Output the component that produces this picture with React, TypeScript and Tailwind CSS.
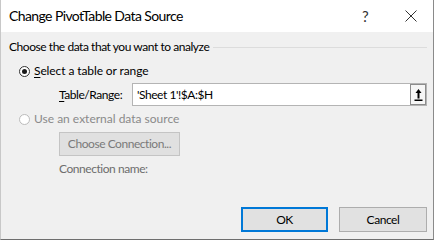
import React from "react"

function Radio({ checked, disabled }: { checked?: boolean; disabled?: boolean }) {
  return (
    <span
      className={`flex h-[11px] w-[11px] items-center justify-center rounded-full border bg-white ${
        disabled ? "border-[#bcbcbc]" : "border-[#333333]"
      }`}
    >
      {checked && <span className="h-[5px] w-[5px] rounded-full bg-[#1a1a1a]" />}
    </span>
  )
}

function CollapseIcon() {
  return (
    <svg width="9" height="14" viewBox="0 0 9 14" fill="none">
      <path d="M4.5 1 L1.5 5 H3.5 V10.5 H5.5 V5 H7.5 Z" fill="#000" />
      <rect x="0.5" y="11.5" width="8" height="1.5" fill="#000" />
    </svg>
  )
}

export default function App() {
  return (
    <div
      className="h-[241px] w-[435px] bg-white text-[12px] tracking-[-0.45px] text-black"
      style={{ fontFamily: 'Lato, "Noto Sans", sans-serif' }}
    >
      <div className="flex h-[240px] w-[434px] flex-col border-r border-b border-l border-r-[#8a8a8a] border-b-[#6e6e6e] border-l-[#c8c8c8] bg-[#f0f0f0]">
        {/* title bar */}
        <div className="flex h-[32px] items-center bg-white pl-[8px]">
          <span className="flex-1 text-[14px] tracking-[-0.6px] leading-none">Change PivotTable Data Source</span>
          <span className="w-[10px] text-[15px] leading-none text-[#333]">?</span>
          <span className="ml-[33px] mr-[16px] flex h-[12px] w-[12px] items-center justify-center">
            <svg width="12" height="12" viewBox="0 0 12 12">
              <path d="M0.5 0.5 L11.5 11.5 M11.5 0.5 L0.5 11.5" stroke="#333" strokeWidth="1" />
            </svg>
          </span>
        </div>

        {/* group header */}
        <div className="mt-[6px] flex h-[18px] items-center pl-[8px] pr-[6px]">
          <span className="whitespace-nowrap leading-none">Choose the data that you want to analyze</span>
          <span className="ml-[4px] h-px flex-1 bg-[#dcdcdc]" />
        </div>

        <div className="mt-[6px] flex h-[18px] items-center pl-[18px]">
          <Radio checked />
          <span className="ml-[4px] leading-none tracking-[-0.1px]">
            <span className="underline underline-offset-2">S</span>elect a table or range
          </span>
        </div>

        <div className="mt-[3px] flex h-[23px] items-center pl-[58px] pr-[6px]">
          <span className="w-[73px] whitespace-nowrap leading-none">
            <span className="underline underline-offset-2">T</span>able/Range:
          </span>
          <div className="flex h-[23px] flex-1 items-center border border-[#b4b4b4] bg-white pl-[4px]">
            <span className="flex-1 leading-none">'Sheet 1'!$A:$H</span>
            <span className="flex h-[21px] w-[16px] items-center justify-center border border-[#8c8c8c] bg-[#f6f6f6]">
              <CollapseIcon />
            </span>
          </div>
        </div>

        <div className="mt-[4px] flex h-[18px] items-center pl-[18px] text-[#8a8a8a]">
          <Radio disabled />
          <span className="ml-[4px] leading-none tracking-normal">Use an external data source</span>
        </div>

        <div className="mt-[4px] pl-[58px]">
          <div className="flex h-[24px] w-[121px] items-center justify-center whitespace-nowrap border border-[#c4c4c4] bg-[#e0e0e0] leading-none text-[#7a7a7a]">
            Choose Connection...
          </div>
        </div>

        <div className="mt-[5px] flex h-[16px] items-center pl-[58px] leading-none text-[#6d6d6d]">
          Connection name:
        </div>

        <div className="mt-[30px] flex justify-end gap-[11px] pr-[6px]">
          <div className="flex h-[25px] w-[87px] items-center justify-center border-2 border-[#0078d7] bg-[#e1e1e1] leading-none">
            OK
          </div>
          <div className="flex h-[25px] w-[88px] items-center justify-center border border-[#adadad] bg-[#e1e1e1] leading-none">
            Cancel
          </div>
        </div>
      </div>
    </div>
  )
}
